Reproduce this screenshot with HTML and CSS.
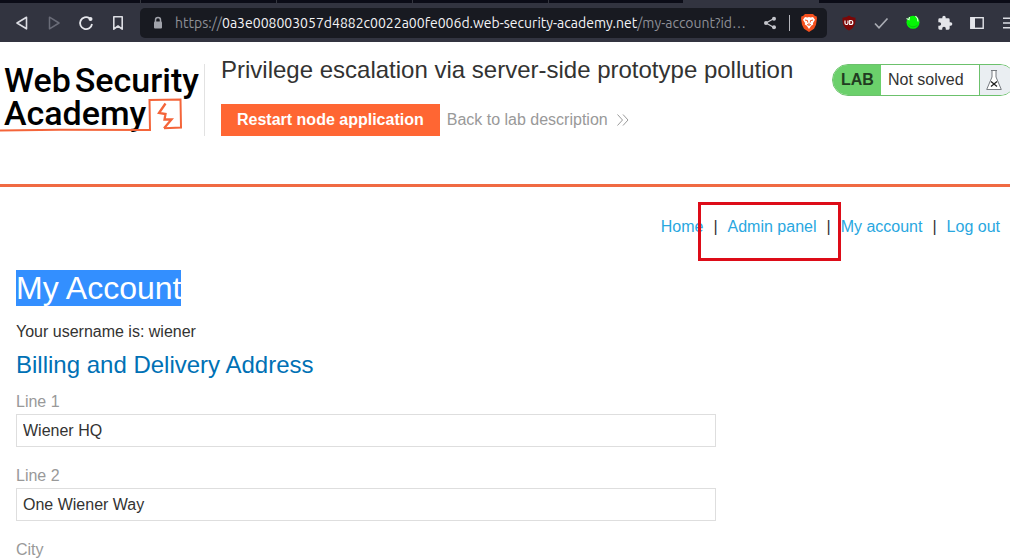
FILE: index.html
```html
<!DOCTYPE html>
<html lang="en">
<head>
<meta charset="utf-8">
<title>Privilege escalation via server-side prototype pollution</title>
<link rel="stylesheet" href="styles.css">
</head>
<body>
<div class="browser">
  <div class="tabs"><span class="tab tab-first"></span><span class="tab"></span><span class="tab"></span><span class="tab"></span><span class="tab tab-last"></span><span class="tab tab-active"></span></div>
  <div class="toolbar">
    <div class="nav-buttons">
      <button class="tool" aria-label="Back"><svg width="16" height="16" viewBox="0 0 16 16" fill="none" stroke="#dcdde3" stroke-width="1.6" stroke-linejoin="round"><path d="M12.5 2.200 3 8l9.500 5.800z"/></svg></button>
      <button class="tool" aria-label="Forward" disabled><svg width="16" height="16" viewBox="0 0 16 16" fill="none" stroke="#6a6c78" stroke-width="1.5" stroke-linejoin="round"><path d="M3.500 2.200 13 8l-9.500 5.800z"/></svg></button>
      <button class="tool" aria-label="Reload"><svg width="16" height="16" viewBox="0 0 16 16" fill="none" stroke="#e6e7ec" stroke-width="1.800"><path d="M11.500 3.200A6 6 0 1 0 14 9"/><circle cx="12.500" cy="4" r="2" fill="#e6e7ec" stroke="none"/></svg></button>
      <button class="tool" aria-label="Bookmark"><svg width="16" height="16" viewBox="0 0 16 16" fill="none" stroke="#dcdde3" stroke-width="1.600" stroke-linejoin="round"><path d="M3.800 1.800h8.400v12.400L8 11l-4.200 3.200z"/></svg></button>
    </div>
    <div class="address">
      <svg width="10" height="14" viewBox="0 0 10 14"><path d="M2.500 6V4a2.500 2.500 0 0 1 5 0v2" fill="none" stroke="#a1a3ab" stroke-width="1.500"/><rect x="1" y="5.500" width="8" height="7" rx="1" fill="#a1a3ab"/></svg>
      <div class="url">https://<span class="host">0a3e008003057d4882c0022a00fe006d.web-security-academy.net</span>/my-account?id…</div>
      <button class="tool" aria-label="Share"><svg width="14" height="14" viewBox="0 0 14 14"><path d="M11 2.500 3 7l8 4.500" fill="none" stroke="#c4c5cb" stroke-width="1.300"/><circle cx="11" cy="2.700" r="2" fill="#c4c5cb"/><circle cx="3" cy="7" r="2" fill="#c4c5cb"/><circle cx="11" cy="11.300" r="2" fill="#c4c5cb"/></svg></button>
      <span class="address-divider"></span>
      <button class="tool" aria-label="Shields"><svg width="18" height="20" viewBox="0 0 18 20"><path d="M5 1h8l2 2 1.500.3.500 2-1 6.500-2 4-5 3.200-5-3.200-2-4-1-6.500.500-2L3 3z" fill="#f4501e"/><path d="m5 4 2.500.400L9 4l1.500.400L13 4l2 2.700-2 3.300.200 1.500-2 1.300L9 16l-2.200-3.200-2-1.300L5 10 3 6.700z" fill="#fff"/><path d="m5 7 2.500.600.300 2M13 7l-2.500.600-.300 2M7 11.500l2 .800 2-.800M9 10v2" fill="none" stroke="#f4501e" stroke-width="1"/></svg></button>
    </div>
    <div class="extensions">
      <button class="tool" aria-label="uBlock"><svg width="16" height="16" viewBox="0 0 16 16"><path d="M8 .500 10.500 2l4 .700c.200 6.300-1 9.800-6.500 12.800C2.500 12.500 1.300 9 1.500 2.700l4-.700z" fill="#7c0707"/><path d="M4 5.500V8a1.500 1.500 0 0 0 3 0V5.500M8.700 5.500h1.200c2.500 0 2.500 4 0 4H8.700z" fill="none" stroke="#fff" stroke-width="1.200"/></svg></button>
      <button class="tool" aria-label="Check"><svg width="16" height="16" viewBox="0 0 16 16"><path d="m2 8.500 4 4.300 8.500-9.300" fill="none" stroke="#a9abb3" stroke-width="1.700"/></svg></button>
      <button class="tool" aria-label="Proxy"><svg width="16" height="16" viewBox="0 0 16 16"><circle cx="8" cy="7.300" r="6.500" fill="#05f505"/><path d="M1.500 3.500 4 4.700 4.500 2M10.500 1l2 2.500.500 3" fill="none" stroke="#d5ffd5" stroke-width="1.200"/><path d="M3.500 9.500c2.500 3 6 3 9 .500" stroke="#08c40c" stroke-width="1" fill="none"/></svg></button>
      <button class="tool" aria-label="Extensions"><svg width="16" height="16" viewBox="0 0 24 24"><path d="M20.500 11H19V7a2 2 0 0 0-2-2h-4V3.500a2.500 2.500 0 0 0-5 0V5H4a2 2 0 0 0-2 2v3.800h1.500a2.700 2.700 0 0 1 0 5.400H2V20a2 2 0 0 0 2 2h3.800v-1.500a2.700 2.700 0 0 1 5.400 0V22H17a2 2 0 0 0 2-2v-4h1.500a2.500 2.500 0 0 0 0-5z" fill="#e4e5ea"/></svg></button>
      <button class="tool" aria-label="Sidebar"><svg width="16" height="16" viewBox="0 0 16 16"><rect x="1.800" y="2.700" width="12.400" height="10.600" fill="none" stroke="#e4e5ea" stroke-width="1.400"/><path d="M1.500 2.500h4.500v11H1.500z" fill="#e4e5ea"/></svg></button>
      <button class="tool" aria-label="Menu"><svg width="16" height="16" viewBox="0 0 16 16"><path d="M2 3.300h12M2 8h12M2 12.700h12" stroke="#dcdde3" stroke-width="1.400"/></svg></button>
    </div>
  </div>
</div>

<header class="lab-header">
  <a class="logo" href="#" aria-label="Web Security Academy">
    <span class="logo-line"><span>Web</span><span>Security</span></span>
    <span class="logo-line">Academy</span>
    <svg class="logo-mark" width="184" height="38" viewBox="0 0 184 38" fill="none" stroke="#f4653a" stroke-width="2"><path d="M0 33.500 60 32.700l90 .300L149.500 3l31-.500.500 28-17 .700"/><path d="m165.500 6.500-6.500 9.500 6.500 1-1 5.500 7 0-7.500 8.700" stroke-width="2.300"/></svg>
  </a>
  <div class="title">
    <h2>Privilege escalation via server-side prototype pollution</h2>
    <div class="actions">
      <button class="restart">Restart node application</button>
      <a class="back" href="#">Back to lab description
        <svg width="12" height="12" viewBox="0 0 12 12" fill="none" stroke="#999"><path d="m.500.500 5 5.500-5 5.500M6 .500 11 6l-5 5.500"/></svg></a>
    </div>
  </div>
  <div class="status">
    <span class="status-lab">LAB</span>
    <span class="status-text">Not solved</span>
    <span class="status-icon"><svg width="16" height="20" viewBox="0 0 16 20" fill="#fff" stroke="#777b80"><path d="M5 .500h6M6 .500V7L.700 19.500h14.600L10 7V.500"/><path d="m5 11.500 6 5M11 11.500l-6 5" stroke="#222" stroke-width="1.300"/></svg></span>
  </div>
</header>

<main class="page">
  <nav class="links">
    <a href="#">Home</a><span>|</span>
    <a class="marked" href="#">Admin panel<span class="marker"></span></a><span>|</span>
    <a href="#">My account</a><span>|</span>
    <a href="#">Log out</a>
  </nav>
  <h1><span class="selected">My Account</span></h1>
  <p>Your username is: wiener</p>
  <h3>Billing and Delivery Address</h3>
  <form class="form">
    <label for="line1">Line 1</label>
    <input id="line1" type="text" value="Wiener HQ">
    <label for="line2">Line 2</label>
    <input id="line2" type="text" value="One Wiener Way">
    <label for="city">City</label>
    <input id="city" type="text">
  </form>
</main>
</body>
</html>
```

FILE: styles.css
```css
* { box-sizing: border-box; }
html { overflow-x: hidden; }
body {
  margin: 0;
  overflow-x: hidden;
  background: #fff;
  color: #333332;
  font: 16px/20px "Liberation Sans", Arial, sans-serif;
}
h1, h2, h3, p { margin: 0; font-weight: 400; }
a { text-decoration: none; }
button { font: inherit; border: 0; }

.browser { background: #323440; overflow: hidden; }
.tabs { display: flex; height: 3px; background: #0b0c17; }
.tab { width: 136px; border-right: 1px solid #34363f; }
.tab-first { width: 141px; }
.tab-last { width: 134px; border: 0; }
.tab-active { background: #323440; border: 0; }
.toolbar { display: flex; align-items: center; height: 39px; padding: 0 0 0 14px; }
.tool { display: flex; flex: none; padding: 0; background: none; }
.nav-buttons { display: flex; gap: 16px; width: 126px; }
.address {
  display: flex;
  flex: 1;
  align-items: center;
  min-width: 0;
  height: 30px;
  padding: 0 9px 0 13px;
  border-radius: 5px;
  background: #181a21;
}
.url {
  flex: 1;
  min-width: 0;
  margin-left: 12px;
  overflow: hidden;
  white-space: nowrap;
  color: #8e9097;
  font: 14px/20px Ubuntu, "Noto Sans", sans-serif;
}
.host { color: #f4f4f6; }
.address-divider { width: 1px; height: 16px; margin: 0 10px 0 12px; background: #b4b5bb; }
.extensions { display: flex; gap: 16px; margin: 0 -7px 0 14px; }

.lab-header {
  display: flex;
  height: 145px;
  padding: 12px 0 0;
  border-bottom: 3px solid #f06a42;
}
.logo {
  position: relative;
  flex: none;
  width: 205px;
  height: 72px;
  margin-top: 10px;
  padding: 0 0 0 4px;
  border-right: 1px solid #e2e2e2;
  color: #000;
  font: 500 34px/33px Roboto, sans-serif;
}
.logo-line { display: flex; gap: 4px; }
.logo-mark { position: absolute; left: 0; bottom: 1px; }
.title { flex: 1; min-width: 0; padding-left: 16px; }
.title h2 { font-size: 24px; line-height: 32px; white-space: nowrap; }
.actions { display: flex; align-items: center; gap: 7px; margin-top: 18px; }
.restart {
  height: 32px;
  padding: 0 16px;
  background: #ff6633;
  color: #fff;
  font-weight: 700;
}
.back { display: flex; align-items: center; gap: 9px; color: #999; }
.status {
  display: flex;
  flex: none;
  height: 32px;
  margin: 10px -6px 0 0;
  overflow: hidden;
  border: 1px solid #6cc16c;
  border-radius: 16px;
  line-height: 30px;
}
.status-lab { width: 48px; padding-left: 8px; background: #6bd06b; color: #213c21; font-weight: 700; }
.status-text { width: 98px; padding-left: 7px; }
.status-icon { display: flex; align-items: center; width: 36px; padding-left: 6px; border-left: 1px solid #6cc16c; background: #eaeef2; }

.page { padding: 30px 10px 24px 16px; }
.links { display: flex; justify-content: flex-end; gap: 10px; color: #333332; }
.links a { color: #29a7df; }
.marked { position: relative; }
.marker { position: absolute; inset: -15px -25px -24px -30px; border: 3px solid #dd0c18; }
h1 { margin-top: 32px; font-size: 32px; line-height: 38px; }
.selected { background: #338fff; color: #fff; }
p { margin-top: 15px; }
h3 { margin-top: 7px; color: #0071b5; font-size: 24px; line-height: 32px; }
.form { display: flex; flex-direction: column; max-width: 700px; margin-top: 11px; }
.form label { color: #999; }
.form input {
  height: 33px;
  margin: 2px 0 19px;
  padding: 0 6px;
  border: 1px solid #dedede;
  background: #fff;
  color: #333332;
  font: inherit;
}
```
